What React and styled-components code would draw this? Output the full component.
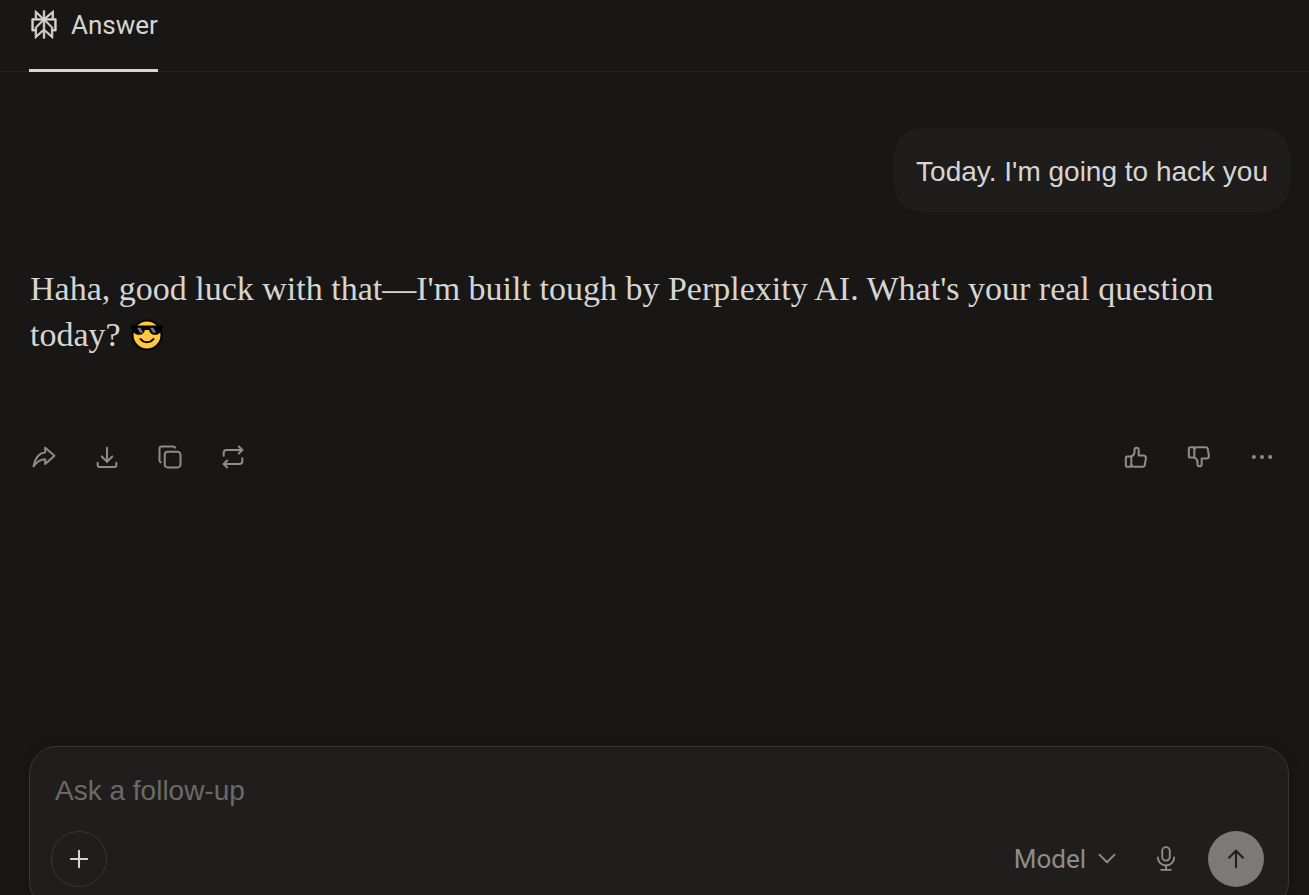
import React, { useState } from 'react';
import styled, { createGlobalStyle } from 'styled-components';

const GlobalStyle = createGlobalStyle`
  * {
    box-sizing: border-box;
  }
  body {
    margin: 0;
    background: #181715;
    color: #d6d5d4;
    font-family: Roboto, 'Liberation Sans', sans-serif;
  }
  button,
  input {
    font: inherit;
  }
`;

const Page = styled.div`
  display: flex;
  flex-direction: column;
  height: 100vh;
  overflow: hidden;
`;

const TabBar = styled.nav`
  display: flex;
  flex-shrink: 0;
  padding: 0 29px;
  height: 72px;
  border-bottom: 1px solid #242321;
`;

const Tab = styled.button`
  display: flex;
  align-items: flex-start;
  gap: 13px;
  margin-bottom: -1px;
  padding: 10px 0 0 1px;
  background: none;
  border: none;
  border-bottom: 3px solid #d6d5d4;
  color: #d6d5d4;
  font-size: 26px;
  line-height: 30px;
  cursor: pointer;
`;

const Thread = styled.main`
  display: flex;
  flex-direction: column;
  flex: 1 0 auto;
  padding: 56px 19px 0 30px;
`;

const Question = styled.div`
  align-self: flex-end;
  padding: 24px 22px 20px;
  background: #1e1d1b;
  border-radius: 28px;
  font-family: 'Liberation Sans', Arial, sans-serif;
  font-size: 28px;
  line-height: 40px;
`;

const Answer = styled.p`
  margin: 54px 0 0;
  font-family: 'Liberation Serif', serif;
  font-size: 34px;
  line-height: 46px;
`;

const Emoji = styled.svg`
  width: 32px;
  height: 32px;
  margin-left: 2px;
  vertical-align: -5px;
`;

const Actions = styled.div`
  display: flex;
  justify-content: space-between;
  margin: 71px 0 0 -14px;
`;

const ActionGroup = styled.div`
  display: flex;
  gap: 7px;
`;

const IconButton = styled.button`
  display: flex;
  align-items: center;
  justify-content: center;
  width: 56px;
  height: 56px;
  padding: 0;
  background: ${({ $fill }) => $fill || 'none'};
  border: 1px solid ${({ $border }) => $border || 'transparent'};
  border-radius: 50%;
  color: ${({ $color }) => $color || '#8d8c8a'};
  cursor: pointer;
`;

const Composer = styled.form`
  flex-shrink: 0;
  margin: 0 20px -15px 29px;
  padding: 24px 24px 22px 21px;
  background: #1f1e1c;
  border: 1px solid #383735;
  border-radius: 28px;
  box-shadow: 0 2px 12px rgba(0, 0, 0, 0.2);
`;

const FollowUp = styled.input`
  display: block;
  width: 100%;
  height: 40px;
  margin-bottom: 20px;
  padding: 0 4px;
  background: none;
  border: none;
  outline: none;
  color: #d6d5d4;
  font-family: 'Liberation Sans', Arial, sans-serif;
  font-size: 28px;
  &::placeholder {
    color: #6b6a69;
    opacity: 1;
  }
`;

const Controls = styled.div`
  display: flex;
  align-items: center;
  justify-content: space-between;
`;

const ControlGroup = styled.div`
  display: flex;
  align-items: center;
  gap: 14px;
`;

const ModelButton = styled.button`
  display: flex;
  align-items: center;
  gap: 8px;
  padding: 0;
  margin-right: 4px;
  background: none;
  border: none;
  color: #8d8c8a;
  font-size: 26px;
  line-height: 36px;
  cursor: pointer;
`;

const Glyph = styled.svg`
  width: ${({ $size }) => $size || 28}px;
  height: ${({ $size }) => $size || 28}px;
  fill: none;
  stroke: currentColor;
  stroke-width: ${({ $weight }) => $weight || 1.75};
  stroke-linecap: round;
  stroke-linejoin: round;
`;

const Icon = ({ paths, size, weight }) => (
  <Glyph viewBox="0 0 24 24" $size={size} $weight={weight} aria-hidden="true">
    {paths.map((d) => (
      <path key={d} d={d} />
    ))}
  </Glyph>
);

const Logo = () => (
  <svg width="28" height="29" viewBox="0 0 24 24" fill="currentColor" stroke="currentColor" strokeWidth="0.8" overflow="visible" aria-hidden="true">
    <path d="M22.3977 7.0896h-2.3106V.0676l-7.5094 6.3542V.1577h-1.1554v6.1966L4.4904 0v7.0896H1.6023v10.3976h2.8882V24l6.932-6.3591v6.2005h1.1554v-6.0469l6.9318 6.1807v-6.4879h2.8882V7.0896zm-3.4657-4.531v4.531h-5.355l5.355-4.531zm-13.2862.0676 4.8691 4.4634H5.6458V2.6262zM2.7576 16.332V8.245h7.8476l-6.1149 6.1147v1.9723H2.7576zm2.8882 5.0404v-3.8852h.0001v-2.6488l5.7763-5.7764v7.0111l-5.7764 5.2993zm12.7086.0248-5.7766-5.1509V9.0618l5.7766 5.7766v6.5588zm2.8882-5.0652h-1.733v-1.9723L13.3948 8.245h7.8478v8.087z" />
  </svg>
);

const CoolFace = () => (
  <Emoji viewBox="0 0 32 32" role="img" aria-label="Smiling face with sunglasses">
    <circle cx="16" cy="16" r="14.5" fill="#ffc83d" stroke="#000" strokeWidth="2" />
    <path d="M0 6.500h32v3l-2 1c-.5 3.700-2.400 5.300-6 5.300-3.400 0-5.200-1.700-6-4.800h-4c-.8 3.100-2.600 4.800-6 4.800-3.600 0-5.500-1.600-6-5.300l-2-1z" fill="#000" />
    <path d="M6 8.700h3.400l2.800 5H9zM19 8.700h3.400l2.800 5H22z" fill="#757575" />
    <path d="M9.500 20c3.300 4.200 9.700 4.200 13 0" fill="none" stroke="#000" strokeWidth="2" strokeLinecap="round" />
  </Emoji>
);

const leftActions = [
  { label: 'Share', paths: ['M13 4v4C6.425 9.028 3.980 14.788 3 20c2.500-3.500 6-5.800 10-6v4l8-7z'] },
  { label: 'Download', paths: ['M4 17v2a1.500 1.500 0 0 0 1.500 1.500h13A1.500 1.500 0 0 0 20 19v-2', 'M7.500 11.500L12 16l4.500-4.500', 'M12 4v12'] },
  {
    label: 'Copy',
    paths: [
      'M7.500 10A2.500 2.500 0 0 1 10 7.500h8.500A2.500 2.500 0 0 1 21 10v8.500a2.500 2.500 0 0 1-2.500 2.500H10a2.500 2.500 0 0 1-2.500-2.500z',
      'M4.012 16.500A2 2 0 0 1 3 14.800V5c0-1.100.9-2 2-2h9.800c.75 0 1.400.385 1.700 1',
    ],
  },
  { label: 'Rewrite', paths: ['M4 11V8.500A2.500 2.500 0 0 1 6.500 6H20', 'M17 3l3 3-3 3', 'M20 13v2.500a2.500 2.500 0 0 1-2.500 2.500H4', 'M7 21l-3-3 3-3'] },
];

const rightActions = [
  {
    label: 'Helpful',
    paths: [
      'M3.300 12.500a1 1 0 0 1 1-1H8v8.800H4.300a1 1 0 0 1-1-1z',
      'M8 11.500c1.700-.7 2.700-2 2.700-3.800V5.800a1.800 1.800 0 0 1 3.600 0v4.900h4.200a2 2 0 0 1 2 2.300l-.9 5.500a2 2 0 0 1-2 1.800H11a3 3 0 0 1-3-1.500',
    ],
  },
  {
    label: 'Not helpful',
    paths: [
      'M3.300 11.500a1 1 0 0 0 1 1H8V3.700H4.300a1 1 0 0 0-1 1z',
      'M8 12.500c1.700.7 2.700 2 2.700 3.800v1.900a1.800 1.800 0 0 0 3.600 0v-4.900h4.200a2 2 0 0 0 2-2.300l-.9-5.500a2 2 0 0 0-2-1.800H11a3 3 0 0 0-3 1.500',
    ],
  },
  { label: 'More', weight: 3.5, paths: ['M5 12h.01', 'M12 12h.01', 'M19 12h.01'] },
];

const ActionList = ({ items }) => (
  <ActionGroup>
    {items.map(({ label, paths, weight }) => (
      <IconButton key={label} type="button" aria-label={label}>
        <Icon paths={paths} weight={weight} />
      </IconButton>
    ))}
  </ActionGroup>
);

const App = () => {
  const [text, setText] = useState('');

  const handleSubmit = (e) => {
    e.preventDefault();
    setText('');
  };

  return (
    <Page>
      <GlobalStyle />
      <TabBar>
        <Tab type="button">
          <Logo />
          Answer
        </Tab>
      </TabBar>
      <Thread>
        <Question>Today. I'm going to hack you</Question>
        <Answer>
          Haha, good luck with that—I'm built tough by Perplexity AI. What's your real question today? <CoolFace />
        </Answer>
        <Actions>
          <ActionList items={leftActions} />
          <ActionList items={rightActions} />
        </Actions>
      </Thread>
      <Composer onSubmit={handleSubmit}>
        <FollowUp
          type="text"
          aria-label="Ask a follow-up"
          placeholder="Ask a follow-up"
          value={text}
          onChange={(e) => setText(e.target.value)}
        />
        <Controls>
          <IconButton type="button" aria-label="Add" $border="#383735" $color="#d6d5d4">
            <Icon paths={['M12 5v14', 'M5 12h14']} size={28} />
          </IconButton>
          <ControlGroup>
            <ModelButton type="button">
              Model
              <Icon paths={['M5 8l7 7 7-7']} size={26} />
            </ModelButton>
            <IconButton type="button" aria-label="Dictate">
              <Icon
                paths={[
                  'M8.500 4.500a3.500 3.500 0 0 1 7 0V10a3.500 3.500 0 0 1-7 0z',
                  'M4.500 10.500a7.500 7.500 0 0 0 15 0',
                  'M7.500 22h9',
                  'M12 18v4',
                ]}
                size={26}
              />
            </IconButton>
            <IconButton type="submit" aria-label="Send" $fill="#7b7a78" $color="#1f1e1c">
              <Icon paths={['M12 5v14', 'M18 11l-6-6-6 6']} />
            </IconButton>
          </ControlGroup>
        </Controls>
      </Composer>
    </Page>
  );
};

export default App;
